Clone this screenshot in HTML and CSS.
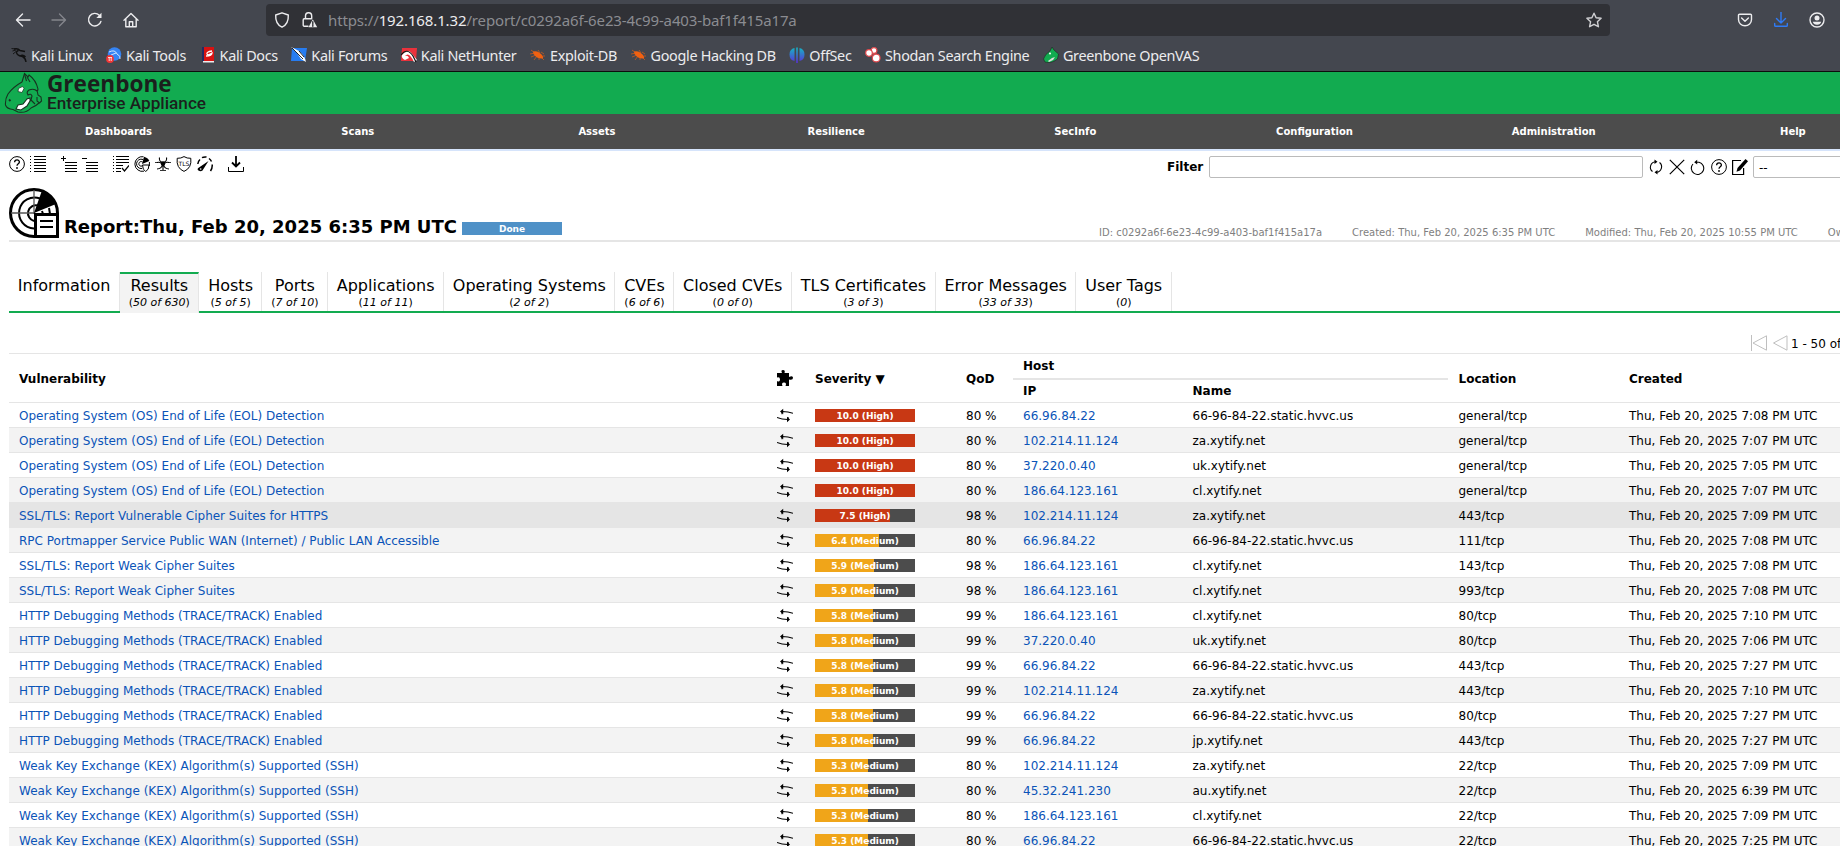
FILE: index.html
```html
<!DOCTYPE html>
<html lang="en">
<head>
<meta charset="utf-8">
<title>Greenbone Enterprise Appliance</title>
<link rel="stylesheet" href="styles.css">
</head>
<body>
<svg class="defs" aria-hidden="true">
  <symbol id="help" viewBox="0 0 16 16"><circle cx="8" cy="8" r="7.4" fill="none" stroke="#000"/><path d="M5.6 6.2C5.7 3.2 10.4 3.2 10.4 6C10.4 7.8 8 7.8 8 9.8" fill="none" stroke="#000" stroke-width="1.3"/><circle cx="8" cy="12" r=".9"/></symbol>
  <symbol id="list" viewBox="0 0 16 16"><path d="M0 .5h1M0 3.5h1M0 6.5h1M0 9.5h1M0 12.5h1M0 15.5h1M4 .5h12M4 3.5h12M4 6.5h12M4 9.5h12M4 12.5h12M4 15.5h12" stroke="#000"/></symbol>
  <symbol id="swap" viewBox="0 0 16 16"><path d="M4 3.500Q11 3.300 16 5.300M0 9.500Q5 11.700 12 11.500M5 3.500v2.700M11 9v2.500" fill="none" stroke="#000" stroke-width="1.100"/><path d="M3 3.500L6.200 .8V6.200zM13 11.500L10 8.800V14.200z"/></symbol>
  <symbol id="bug" viewBox="0 0 16 16"><g fill="#f26111"><path d="M3 4.500Q8 3 12 8Q14 11 12.500 11.500Q7 12 3.500 7z"/><path d="M1 3l4 3M0 7l5-1M1 10l5-2M4 13l3-4M8 3l2 3M11 5l3 2M13 9l2 0M9 11l0 2M12 11l2 2" stroke="#f26111" stroke-width=".6"/></g></symbol>
</svg>

<header class="browser">
  <div class="navbar">
    <div class="nav-buttons">
      <svg width="16" height="16" viewBox="0 0 16 16" class="line"><path d="M15 8H1.6M7.5 2L1.5 8l6 6"/></svg>
      <svg width="16" height="16" viewBox="0 0 16 16" class="line dim"><path d="M1 8h13.4M8.500 2l6 6-6 6"/></svg>
      <svg width="16" height="16" viewBox="0 0 16 16" class="line"><path d="M13.900 9.500A6.300 6.300 0 1 1 12.300 3.200"/><path d="M14.500 .8V6H9.300z" class="solid"/></svg>
      <svg width="16" height="16" viewBox="0 0 16 16" class="line"><path d="M1 8.200L8 1.500l7 6.700M2.800 7v7.700h10.400V7M6.300 14.500V9.700h3.400v4.800"/></svg>
    </div>
    <div class="urlbar">
      <svg width="16" height="16" viewBox="0 0 16 16" class="line"><path d="M8 .8L14.300 3Q14.800 12 8 15.200Q1.200 12 1.700 3z"/></svg>
      <svg width="16" height="16" viewBox="0 0 16 16" class="line"><path d="M3.500 6.500V4A3 3.200 0 0 1 9.700 4v2.500M6 14.200H2.200Q1.200 14.200 1.200 13V8Q1.200 6.800 2.200 6.800H9.500"/><path d="M10.800 7.200L15.200 15.200H6.500z" class="solid"/><path d="M10.800 9.800v2.600M10.800 13.300v1" stroke="#303136"/></svg>
      <span class="url">https://<b>192.168.1.32</b>/report/c0292a6f-6e23-4c99-a403-baf1f415a17a</span>
      <svg width="16" height="16" viewBox="0 0 16 16" class="line star"><path d="M8 1.200l2.100 4.500 5 .6-3.700 3.400 1 5L8 12.300l-4.400 2.400 1-5L.9 6.300l5-.6z"/></svg>
    </div>
    <div class="nav-end">
      <svg width="16" height="16" viewBox="0 0 16 16" class="line"><path d="M2.500 2.200h11Q14.500 2.200 14.500 3.200V7.500A6.500 6.300 0 0 1 1.500 7.500V3.200Q1.500 2.200 2.500 2.200zM4.600 6l3.400 3.200L11.400 6"/></svg>
      <svg width="16" height="16" viewBox="0 0 16 16" class="line blue"><path d="M8 0v11M3.500 6.500L8 11l4.500-4.500M1.700 11.500v2Q1.700 14.300 2.700 14.300h10.600Q14.300 14.300 14.300 13.500v-2"/></svg>
      <svg width="16" height="16" viewBox="0 0 16 16" class="line"><circle cx="8" cy="8" r="7"/><circle cx="8" cy="6" r="2.500" class="fill"/><path d="M3.800 9.800h8.400Q11.500 12.800 8 12.800T3.800 9.800z" class="fill"/></svg>
    </div>
  </div>
  <nav class="bookmarks">
    <a><svg width="16" height="16" viewBox="0 0 16 16"><path d="M.5 1.500L4 2M1.500 4L5 3M2 7l3-2.500" stroke="#111" stroke-width=".9"/><path d="M3 2Q7 1 9 3.500L14 4.500M7.500 3.500Q4 4.500 6.500 7.500Q8 9 11.500 9.500Q14.500 11 15 15M9 9Q12 7 14.500 10" fill="none" stroke="#111" stroke-width="1.400"/></svg><span>Kali Linux</span></a>
    <a><svg width="16" height="16" viewBox="0 0 16 16"><circle cx="8.500" cy="7" r="6.800" fill="#3584f4"/><path d="M3 5Q9 2 11 7Q15 9 14 12M5 8l5-2" fill="none" stroke="#cfe4ff"/><circle cx="4" cy="12" r="3.900" fill="#f03535"/><path d="M2 10.500h4M3.200 10.500V14M5.200 10.500V14" stroke="#fff" stroke-width=".8"/></svg><span>Kali Tools</span></a>
    <a><svg width="16" height="16" viewBox="0 0 16 16"><path d="M2 0h12v14H2z" fill="#d81212"/><path d="M2 0h2v14H2z" fill="#252b63"/><path d="M3 14h11v1.500H3z" fill="#eee"/><path d="M12 4Q6 5 7 7t5-1Q12 9 6 9" fill="none" stroke="#fff" stroke-width="1.300"/></svg><span>Kali Docs</span></a>
    <a><svg width="16" height="16" viewBox="0 0 16 16"><path d="M1 1h15l-2 13H0z" fill="#277cf0"/><path d="M0 0l8 4q6 5 7 11l-5-3-4-6z" fill="#fff"/><path d="M1 1l5 5 6 6M8 4l5 6" stroke="#111" stroke-width=".9"/></svg><span>Kali Forums</span></a>
    <a><svg width="16" height="16" viewBox="0 0 16 16"><path d="M1 1h15l-1 13H0z" fill="#e9323c"/><path d="M1 8Q7 0 12 8l4 5-3 2Q8 4 4 9q3-1 4 2l-4 2Q0 11 1 8z" fill="#fff"/><path d="M0 8Q6 0 12 9l3 6" fill="none" stroke="#111" stroke-width="1.200"/></svg><span>Kali NetHunter</span></a>
    <a><svg width="16" height="16"><use href="#bug"/></svg><span>Exploit-DB</span></a>
    <a><svg width="16" height="16"><use href="#bug"/></svg><span>Google Hacking DB</span></a>
    <a><svg width="16" height="16" viewBox="0 0 16 16"><defs><linearGradient id="og" x2="0" y2="1"><stop stop-color="#15b5c4"/><stop offset="1" stop-color="#5a2fd6"/></linearGradient></defs><path d="M5.500 1V14Q.5 13 .5 7.500T5.500 1zM7.200 .5h1.600V16H7.200zM10.500 1V14Q15.500 13 15.500 7.500T10.500 1z" fill="url(#og)"/></svg><span>OffSec</span></a>
    <a><svg width="16" height="16" viewBox="0 0 16 16"><g fill="#fff" stroke="#e0484c" stroke-width="1.200"><circle cx="9" cy="3.500" r="2.900"/><circle cx="4" cy="6" r="3.300"/><circle cx="11.200" cy="11" r="3.900"/></g></svg><span>Shodan Search Engine</span></a>
    <a><svg width="16" height="16" viewBox="0 0 16 16"><path d="M.5 12Q2 7 7 4L9 0l2 3 4.500 4-1 5Q8 17 2 15z" fill="#12ab50" stroke="#222" stroke-width=".6"/><path d="M5 14l4-3 3-1-2 3-4 2z" fill="#ddd"/><circle cx="7" cy="6.500" r="1" fill="#fff"/></svg><span>Greenbone OpenVAS</span></a>
  </nav>
</header>

<div class="brand">
  <svg width="39" height="42" viewBox="0 0 39 42" fill="none" stroke="#173320" stroke-width="1.100">
    <path d="M18 10L20.500 1.500 24 5 25 3Q32 8 34 17L33.500 19M18 10Q9 15 4 22Q1 27 1.500 33Q3 37 9 37.500L14 40Q22 41.500 27 36Q32 34 35 31"/>
    <path d="M20.500 2l2 7M23 5l3 5M33 18l1 5 3 2 .5 4-2 2-2.500-2 0-4M33 19q-3-3-8-1-3 2-1 5 3-2 4 1l-1 4 4 4M23 27q3-1 4 2"/>
    <path d="M14.500 16.500l4-2 1.500 2-2 4-4-1z" fill="#fff" stroke-width=".7"/><path d="M12 37l2-4 5-1 4-5 3-1 0 3-3 5-6 4z" fill="#fff"/><path d="M5 27.500l1.500 1.500" stroke-width="1.800"/>
  </svg>
  <div class="brand-text"><strong>Greenbone</strong><span>Enterprise Appliance</span></div>
</div>
<nav class="menu"><a>Dashboards</a><a>Scans</a><a>Assets</a><a>Resilience</a><a>SecInfo</a><a>Configuration</a><a>Administration</a><a>Help</a></nav>

<main class="page">
  <div class="toolbar">
    <div class="tools">
      <span><svg><use href="#help"/></svg><svg><use href="#list"/></svg></span>
      <span><svg viewBox="0 0 16 16"><path d="M0 2.500h5M2.500 0v5M4 6.500h12M4 9.500h12M4 12.500h12M4 15.500h12" stroke="#000"/></svg><svg viewBox="0 0 16 16"><path d="M0 2.500h5M4 6.500h12M4 9.500h12M4 12.500h12M4 15.500h12" stroke="#000"/></svg></span>
      <span>
        <svg viewBox="0 0 16 16"><path d="M0 .5h1M0 3.500h1M0 6.500h1M0 9.500h1M0 12.500h1M0 15.500h1M3 .5h13M3 3.500h13M3 6.500h13M3 9.500h7M3 12.500h5M3 15.500h5" stroke="#000"/><path d="M9 12l2.500 3L16 9.500" fill="none" stroke="#000" stroke-width="1.200"/></svg>
        <svg viewBox="0 0 16 16"><g fill="none" stroke="#000"><path d="M9.500 .7A7.400 7.400 0 1 0 10 15.200"/><path d="M9 3.500A4.700 4.700 0 1 0 8 12.500M8.500 6A2.300 2.300 0 1 0 8 10M15.400 6v4"/><path d="M8.500 9h6.500q0 5-3.300 6.500Q8.500 14 8.500 9z" fill="#fff"/></g><path d="M8 8L10 .7q4 1 5.300 4.300z"/></svg>
        <svg viewBox="0 0 16 16"><g fill="none" stroke="#000" stroke-width="1.100"><path d="M4.500 1.500Q3.500 5.500 8 6.500Q12.500 5.500 11.500 1.500M2 13Q6.500 13 7.500 8.500Q6 5.500 2 6.500M14 13Q9.500 13 8.500 8.500Q10 5.500 14 6.500M8 6v8"/></g><circle cx="8" cy="7.500" r="2.300"/><path d="M5 14.500h6M0 6.500h3M13 6.500h3" stroke="#000" stroke-width=".8"/></svg>
        <svg viewBox="0 0 16 16"><path d="M8 .6Q11 2.500 14.800 2.300Q16 12 8 15.400Q0 12 1.200 2.300Q5 2.500 8 .6z" fill="none" stroke="#000"/><text x="8" y="9.500" class="tls">TLS</text></svg>
        <svg viewBox="0 0 16 16"><path d="M.8 8Q1.200 5 3 3.500M5 1.700Q7 .6 9.500 1M12 2.500Q13.700 3.700 14.500 5.500M15.200 8.500Q15.500 12 13.500 15" fill="none" stroke="#000" stroke-width="1.500"/><path d="M11.500 5L5.500 14.500Q3.500 16 1.500 14.500T2 11.500z"/><circle cx="3.700" cy="13" r=".8" fill="#fff"/></svg>
      </span>
      <span><svg viewBox="0 0 16 16"><path d="M.5 11v4.500h15V11" fill="none" stroke="#000"/><path d="M8 0v10M4 6.500l4 4 4-4" fill="none" stroke="#000" stroke-width="1.800"/></svg></span>
    </div>
    <div class="filter">
      <label>Filter</label><div class="input"></div>
      <div class="filter-icons">
        <svg viewBox="0 0 16 16"><path d="M4.500 12.500A5.500 5.500 0 0 1 7.500 2.700M11.500 3.500A5.500 5.500 0 0 1 8.500 13.300" fill="none" stroke="#000" stroke-width="1.100"/><path d="M6.500 .5l3 2.200L6.500 5zM9.500 11v4.500L6.500 13.300z"/></svg>
        <svg viewBox="0 0 16 16"><path d="M.8 .8l14.400 14.400M15.200 .8L.8 15.200" stroke="#000" stroke-width="1.200"/></svg>
        <svg viewBox="0 0 16 16"><path d="M7 3.200h2A6.200 6.200 0 1 1 3 5" fill="none" stroke="#000" stroke-width="1.100"/><path d="M7.200 .8v4.800L4.200 3.200z"/></svg>
        <svg><use href="#help"/></svg>
        <svg viewBox="0 0 16 16"><path d="M9 1.500H.6v14h11V9" fill="none" stroke="#000" stroke-width="1.200"/><path d="M13.500 0L16 2.300 8 11.500l-3.500 1.300L5.500 9z"/></svg>
      </div>
      <div class="select">--</div>
    </div>
  </div>

  <div class="title">
    <svg width="50" height="50" viewBox="0 0 50 50"><g fill="none" stroke="#000"><path d="M25 1.500A23.500 23.500 0 0 0 25 48.500H28M25 1.500A23.500 23.500 0 0 1 48.500 25V28" stroke-width="3"/><path d="M31 10.500A15.500 15.500 0 1 0 25 40.500M29 17.500A8 8 0 1 0 25 33M40 20l1 6M33 23l1 3" stroke-width="2"/><path d="M2 25h24M25 2v24" stroke="#555" stroke-width="1.300"/></g><path d="M25 25L33 2.500Q43 6 47 16z"/><path d="M26.500 26.500h22v22h-22z" fill="#fff" stroke="#000" stroke-width="3"/><path d="M31 33h13M31 39h13" stroke="#000" stroke-width="2"/></svg>
    <h1>Report:Thu, Feb 20, 2025 6:35 PM UTC</h1>
    <div class="bar done">Done</div>
    <div class="meta"><span>ID: c0292a6f-6e23-4c99-a403-baf1f415a17a</span><span>Created: Thu, Feb 20, 2025 6:35 PM UTC</span><span>Modified: Thu, Feb 20, 2025 10:55 PM UTC</span><span>Owner: admin</span></div>
  </div>

  <div class="tabs">
    <div class="tab">Information</div>
    <div class="tab active">Results<small>(<i>50 of 630</i>)</small></div>
    <div class="tab">Hosts<small>(<i>5 of 5</i>)</small></div>
    <div class="tab">Ports<small>(<i>7 of 10</i>)</small></div>
    <div class="tab">Applications<small>(<i>11 of 11</i>)</small></div>
    <div class="tab">Operating Systems<small>(<i>2 of 2</i>)</small></div>
    <div class="tab">CVEs<small>(<i>6 of 6</i>)</small></div>
    <div class="tab">Closed CVEs<small>(<i>0 of 0</i>)</small></div>
    <div class="tab">TLS Certificates<small>(<i>3 of 3</i>)</small></div>
    <div class="tab">Error Messages<small>(<i>33 of 33</i>)</small></div>
    <div class="tab">User Tags<small>(<i>0</i>)</small></div>
  </div>

  <div class="pager">
    <svg viewBox="0 0 16 16"><path d="M.5 0v16M15.500 .8v14.400L2 8z"/></svg>
    <svg viewBox="0 0 16 16"><path d="M15 .8v14.400L1.500 8z"/></svg>
    <span>1 - 50 of 630</span>
  </div>

  <div class="results">
    <div class="row head">
      <div>Vulnerability</div>
      <div><svg viewBox="0 0 16 16" class="puzzle"><path d="M0 3h5Q3.500 0 6 0T7.500 3H12v4q4-2 4 .8T12 9.500V16H8.500q1.500-3.500-1.500-3.500T5.500 16H0v-5q3 1.500 3-1.500T0 7.500z"/></svg></div>
      <div>Severity ▼</div>
      <div>QoD</div>
      <div class="host"><div class="host-top">Host</div><div>IP</div><div>Name</div></div>
      <div>Location</div>
      <div>Created</div>
    </div>
  </div>
</main>
<script src="rows.js"></script>
</body>
</html>
```
FILE: styles.css
```css
* { box-sizing: border-box; }
html { overflow: hidden; }
body { margin: 0; width: 1840px; height: 846px; overflow: hidden; background: #fff; color: #000; font: 12px "DejaVu Sans", sans-serif; }
.defs { position: absolute; width: 0; height: 0; }
svg { display: block; flex: none; }

.browser { height: 72px; background: #44474f; border-bottom: 1px solid #0c0c0d; font-family: "Noto Sans", sans-serif; color: #ececee; }
.navbar { height: 40px; padding: 4px 14px 4px 15px; display: flex; align-items: center; }
.nav-buttons { display: flex; gap: 20px; width: 251px; }
.line { fill: none; stroke: #ececee; stroke-width: 1.4; stroke-linejoin: round; stroke-linecap: round; }
.line .solid { fill: #ececee; stroke: none; }
.line .fill { fill: #ececee; stroke: none; }
.dim { stroke: #84868c; }
.blue { stroke: #2f7bf6; }
.urlbar { width: 1344px; height: 32px; padding: 0 8px; display: flex; align-items: center; border-radius: 4px; background: #303136; }
.urlbar svg + svg { margin-left: 12px; }
.url { margin-left: 10px; font-size: 15px; letter-spacing: -.13px; color: #8b8c91; white-space: nowrap; }
.url b { font-weight: 400; color: #ececee; }
.star { margin-left: auto; stroke: #d0d0d3; }
.nav-end { margin-left: auto; display: flex; gap: 20px; padding-right: 1px; }
.bookmarks { height: 31px; padding: 0 0 1px 11px; display: flex; align-items: center; gap: 13.5px; font-size: 14.4px; letter-spacing: -.32px; white-space: nowrap; }
.bookmarks a { display: flex; align-items: center; gap: 4px; }

.brand { height: 42px; padding-left: 4px; display: flex; gap: 4px; background: #12ab50; color: #1b1f1d; }
.brand-text { display: flex; flex-direction: column; }
.brand-text strong { font: 700 22.6px/23px "Open Sans", sans-serif; }
.brand-text span { font: 500 17.2px/16px Roboto, sans-serif; }
.menu { height: 37px; display: flex; background: #4c4c4c; border-bottom: 2px solid #d6e4fb; overflow: hidden; }
.menu a { flex: 0 0 239.2px; padding-right: 2px; text-align: center; color: #fff; font-size: 10px; font-weight: 700; line-height: 35px; }

.page { padding-left: 9px; width: 1840px; overflow: hidden; }
.toolbar { height: 37px; display: flex; padding-top: 5px; }
.toolbar svg, .pager svg { width: 16px; height: 16px; }
.tools { flex: 0 0 1158px; display: flex; gap: 15px; }
.tools span { display: flex; gap: 5px; }
.tls { font-size: 6px; text-anchor: middle; }
.filter { display: flex; flex: none; align-items: center; height: 22px; }
.filter label { width: 42px; font-size: 12px; font-weight: 700; }
.input { width: 434px; height: 22px; border: 1px solid #bbb; border-radius: 2px; }
.filter-icons { display: flex; gap: 5px; margin: 0 5px; }
.select { width: 180px; height: 22px; padding-left: 5px; border: 1px solid #bbb; border-radius: 2px; line-height: 22px; }

.title { height: 54px; display: flex; align-items: flex-end; padding-bottom: 2px; border-bottom: 2px solid #e5e5e5; white-space: nowrap; }
.title h1 { flex: none; width: 397px; margin: 0; padding: 0 0 0 5px; font-size: 18px; line-height: 22px; }
.bar { flex: none; width: 100px; height: 13px; color: #fff; text-align: center; font-size: 9px; font-weight: 700; line-height: 14px; }
.done { background: #4f91c7; margin: 0 0 3px 6px; }
.meta { flex: none; margin: 0 0 -1px 537px; display: flex; gap: 30px; color: #7f7f7f; font-size: 10px; line-height: 12px; }

.tabs { margin-top: 30px; height: 41px; display: flex; box-shadow: inset 0 -2px #12ab50; }
.tab { height: 39px; padding: 4px 8.5px 0 8.8px; border-right: 1px solid #e5e5e5; text-align: center; font-size: 16px; line-height: 19px; white-space: nowrap; }
.tab small { display: block; padding-top: 1px; font-size: 11px; line-height: 13px; }
.tab.active { height: 41px; padding-top: 2px; border-top: 2px solid #12ab50; background: #f3f3f3; }

.pager { height: 40px; padding: 22px 0 0 1742px; display: flex; gap: 5px; white-space: nowrap; }
.pager path { fill: none; stroke: #bfbfbf; }
.pager span { margin-left: -2px; line-height: 18px; }

.row { height: 25px; display: grid; grid-template-columns: 758px 38px 151px 57px 169.5px 266px 170.5px 296px; align-items: center; border-bottom: 1px solid #e5e5e5; white-space: nowrap; }
.row > div { padding: 1px 0 0 10px; }
.row svg { width: 16px; height: 16px; }
.row:nth-child(odd) { background: #f3f3f3; }
.row.hover { background: #e5e5e5; }
.row a { color: #0b54b8; }
.row.head { height: 50px; background: #fff; border-top: 1px solid #e5e5e5; font-weight: 700; }
.row .puzzle { margin-bottom: 3px; }
.row.head > .host { grid-column: span 2; display: grid; grid-template-columns: 169.5px 265.5px; padding: 1px 0 0; line-height: 23px; }
.host div { padding-left: 10px; }
.host .host-top { grid-column: span 2; border-bottom: 2px solid #e5e5e5; }
```
FILE: rows.js
```js
const OS = 'Operating System (OS) End of Life (EOL) Detection';
const WEAK = 'SSL/TLS: Report Weak Cipher Suites';
const TRACE = 'HTTP Debugging Methods (TRACE/TRACK) Enabled';
const KEX = 'Weak Key Exchange (KEX) Algorithm(s) Supported (SSH)';
const STATIC = '66-96-84-22.static.hvvc.us';

const results = [
  [OS, 10, 80, '66.96.84.22', STATIC, 'general/tcp', '7:08'],
  [OS, 10, 80, '102.214.11.124', 'za.xytify.net', 'general/tcp', '7:07'],
  [OS, 10, 80, '37.220.0.40', 'uk.xytify.net', 'general/tcp', '7:05'],
  [OS, 10, 80, '186.64.123.161', 'cl.xytify.net', 'general/tcp', '7:07'],
  ['SSL/TLS: Report Vulnerable Cipher Suites for HTTPS', 7.5, 98, '102.214.11.124', 'za.xytify.net', '443/tcp', '7:09'],
  ['RPC Portmapper Service Public WAN (Internet) / Public LAN Accessible', 6.4, 80, '66.96.84.22', STATIC, '111/tcp', '7:08'],
  [WEAK, 5.9, 98, '186.64.123.161', 'cl.xytify.net', '143/tcp', '7:08'],
  [WEAK, 5.9, 98, '186.64.123.161', 'cl.xytify.net', '993/tcp', '7:08'],
  [TRACE, 5.8, 99, '186.64.123.161', 'cl.xytify.net', '80/tcp', '7:10'],
  [TRACE, 5.8, 99, '37.220.0.40', 'uk.xytify.net', '80/tcp', '7:06'],
  [TRACE, 5.8, 99, '66.96.84.22', STATIC, '443/tcp', '7:27'],
  [TRACE, 5.8, 99, '102.214.11.124', 'za.xytify.net', '443/tcp', '7:10'],
  [TRACE, 5.8, 99, '66.96.84.22', STATIC, '80/tcp', '7:27'],
  [TRACE, 5.8, 99, '66.96.84.22', 'jp.xytify.net', '443/tcp', '7:27'],
  [KEX, 5.3, 80, '102.214.11.124', 'za.xytify.net', '22/tcp', '7:09'],
  [KEX, 5.3, 80, '45.32.241.230', 'au.xytify.net', '22/tcp', '6:39'],
  [KEX, 5.3, 80, '186.64.123.161', 'cl.xytify.net', '22/tcp', '7:09'],
  [KEX, 5.3, 80, '66.96.84.22', STATIC, '22/tcp', '7:25'],
];

const table = document.querySelector('.results');
for (const [name, score, qod, ip, host, port, time] of results) {
  const high = score >= 7;
  const color = high ? '#c83814' : '#f0a519';
  const stop = score * 10;
  table.insertAdjacentHTML('beforeend', `<div class="row${score === 7.5 ? ' hover' : ''}">
    <div><a>${name}</a></div>
    <div><svg><use href="#swap"/></svg></div>
    <div><div class="bar" style="background:linear-gradient(90deg,${color} ${stop}%,#4c4c4c ${stop}%)">${score.toFixed(1)} (${high ? 'High' : 'Medium'})</div></div>
    <div>${qod} %</div>
    <div><a>${ip}</a></div>
    <div>${host}</div>
    <div>${port}</div>
    <div>Thu, Feb 20, 2025 ${time} PM UTC</div>
  </div>`);
}
```
